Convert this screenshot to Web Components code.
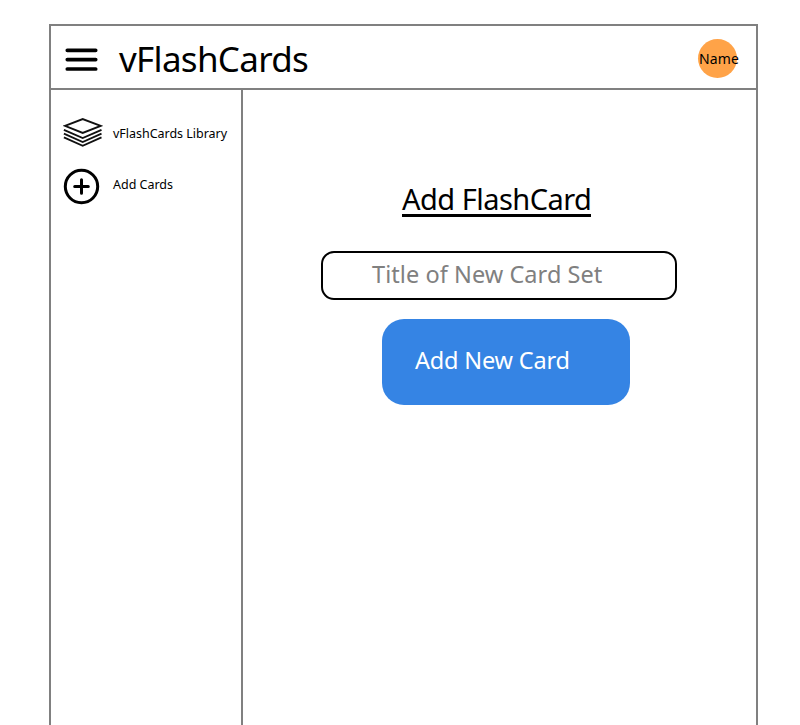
<!DOCTYPE html>
<html lang="en"><head><meta charset="utf-8"><title>vFlashCards</title>
<style>html,body{margin:0;height:100%;background:#fff;overflow:hidden}body{font-family:"Noto Sans",sans-serif;color:#000}</style></head>
<body><flash-app></flash-app>
<script>
const define=(name,html)=>customElements.define(name,class extends HTMLElement{
  constructor(){super();this.attachShadow({mode:'open'}).innerHTML=html}
});
define('menu-button',`<style>:host{display:block;width:34px;height:26px}svg{display:block}</style>
<svg width="34" height="26" fill="none" stroke="#000" stroke-width="3.7" stroke-linecap="round"><path d="M2.3 3.3H30.7M2.3 12.6H30.7M2.3 22H30.7"/></svg>`);
define('user-avatar',`<style>:host{display:flex;width:39px;height:39px;border-radius:50%;background:#ffa348;align-items:center;justify-content:flex-start;white-space:nowrap;font-size:14px;line-height:20px}span{margin-left:1px;letter-spacing:.1px}</style><span><slot></slot></span>`);
define('app-header',`<style>:host{display:flex;box-sizing:border-box;height:64px;border-bottom:2px solid #808080;padding:0 19px 0 14px;align-items:center}
h1{font-weight:400;font-size:35px;line-height:48px;margin:3px 0 0 20px;letter-spacing:-.7px;white-space:nowrap}menu-button{margin-top:5px}user-avatar{margin:3px 0 0 auto}</style>
<menu-button></menu-button><h1><slot></slot></h1><user-avatar>Name</user-avatar>`);
define('nav-item',`<style>:host{display:flex;align-items:center;height:40px;font-size:12.5px;line-height:18px;white-space:nowrap}.icon{display:flex;width:40px;flex:none}.label{margin:var(--nudge,0) 0 0 10px;letter-spacing:-.02px}</style><div class="icon"><slot name="icon"></slot></div><div class="label"><slot></slot></div>`);
define('side-nav',`<style>:host{display:flex;flex-direction:column;box-sizing:border-box;width:192px;flex:none;border-right:2px solid #808080;padding:23px 0 0 12px;gap:13px}svg{display:block}.library{--nudge:2px}.add{--nudge:-2px}</style>
<nav-item class="library"><svg slot="icon" width="40" height="40" fill="none" stroke="#111" stroke-width="1.9" stroke-linejoin="miter"><path d="M2 12.8 19.7 6l18 6.8-18 7.2Z"/><path d="M.9 16.8 19.7 25l18.8-8.2M.9 20.7 19.7 29l18.8-8.3M.9 24.4l18.8 8.4 18.8-8.4"/></svg>vFlashCards Library</nav-item>
<nav-item class="add"><svg slot="icon" width="40" height="40" fill="none" stroke="#000" stroke-width="3" stroke-linecap="round"><circle cx="18.5" cy="20.5" r="16.2"/><path d="M11.7 20.5h13.6M18.5 13.7v13.6"/></svg>Add Cards</nav-item>`);
define('title-field',`<style>:host{display:block;box-sizing:border-box;width:356px;height:49px;border:2px solid #000;border-radius:13px;padding:4px 0 0 49px;color:#808080;font-size:23.5px;line-height:34px;white-space:nowrap;letter-spacing:.06px}</style><slot></slot>`);
define('action-button',`<style>:host{display:block;box-sizing:border-box;width:248px;height:86px;border-radius:22px;background:#3584e4;color:#fff;padding:24px 0 0 33px;font-size:23.5px;line-height:34px;white-space:nowrap;letter-spacing:-.18px}</style><slot></slot>`);
define('card-form',`<style>:host{display:flex;flex-direction:column;align-items:flex-start;flex:1;padding-top:91px}
h2{font-weight:400;font-size:29px;line-height:35px;height:36px;box-sizing:border-box;border-bottom:3px solid #000;width:189px;margin:0 0 34px 159px;white-space:nowrap;letter-spacing:-.52px}
title-field{margin-left:78px}action-button{margin:19px 0 0 139px}</style>
<h2>Add FlashCard</h2><title-field>Title of New Card Set</title-field><action-button>Add New Card</action-button>`);
define('flash-app',`<style>:host{display:flex;flex-direction:column;box-sizing:border-box;width:709px;height:calc(100vh - 24px);margin:24px 0 0 49px;border:2px solid #808080;border-bottom:0}
main{display:flex;flex:1;min-height:0}</style><app-header>vFlashCards</app-header><main><side-nav></side-nav><card-form></card-form></main>`);
</script></body></html>
